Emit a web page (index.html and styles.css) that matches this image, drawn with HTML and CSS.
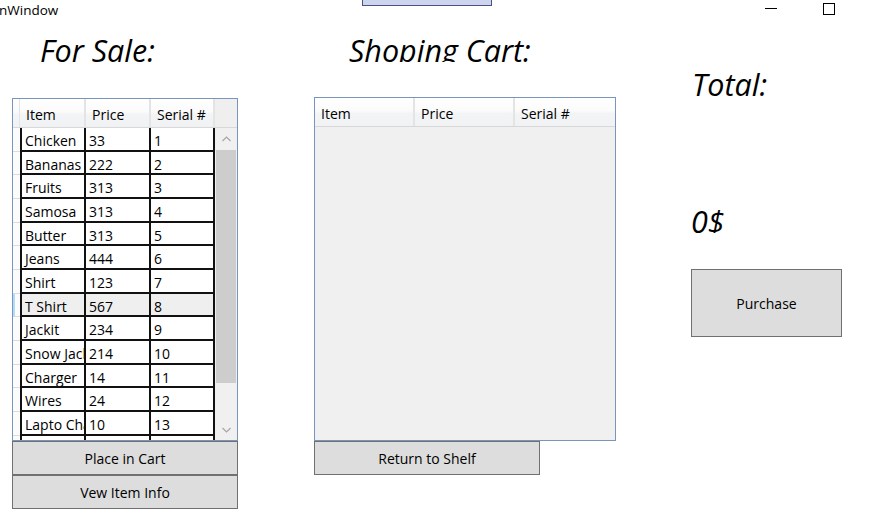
FILE: index.html
```html
<!DOCTYPE html>
<html>
<head>
<meta charset="utf-8">
<title>MainWindow</title>
<link rel="stylesheet" href="styles.css">
</head>
<body>
<div class="window">
  <div class="titlebar">
    <span class="title">nWindow</span>
    <div class="drag-tab"></div>
    <div class="controls">
      <span class="ctl-min"></span>
      <span class="ctl-max"></span>
    </div>
  </div>
  <div class="content">
    <section class="col col-sale">
      <div class="heading heading-sale">For Sale:</div>
      <div class="grid grid-sale">
        <div class="ghead">
          <div class="gh gh-corner"></div>
          <div class="gh gh-item">Item</div>
          <div class="gh gh-price">Price</div>
          <div class="gh gh-serial">Serial #</div>
          <div class="gh gh-fill"></div>
        </div>
        <div class="gbody">
          <div class="rowheads">
            <div class="rh"></div><div class="rh"></div><div class="rh"></div><div class="rh"></div>
            <div class="rh"></div><div class="rh"></div><div class="rh"></div><div class="rh rh-hover"></div>
            <div class="rh"></div><div class="rh"></div><div class="rh"></div><div class="rh"></div>
            <div class="rh"></div><div class="rh"></div>
          </div>
          <div class="cells">
            <div class="row"><div class="c c-item">Chicken</div><div class="c c-price">33</div><div class="c c-serial">1</div></div>
            <div class="row"><div class="c c-item">Bananas</div><div class="c c-price">222</div><div class="c c-serial">2</div></div>
            <div class="row"><div class="c c-item">Fruits</div><div class="c c-price">313</div><div class="c c-serial">3</div></div>
            <div class="row"><div class="c c-item">Samosa</div><div class="c c-price">313</div><div class="c c-serial">4</div></div>
            <div class="row"><div class="c c-item">Butter</div><div class="c c-price">313</div><div class="c c-serial">5</div></div>
            <div class="row"><div class="c c-item">Jeans</div><div class="c c-price">444</div><div class="c c-serial">6</div></div>
            <div class="row"><div class="c c-item">Shirt</div><div class="c c-price">123</div><div class="c c-serial">7</div></div>
            <div class="row row-hover"><div class="c c-item">T Shirt</div><div class="c c-price">567</div><div class="c c-serial">8</div></div>
            <div class="row"><div class="c c-item">Jackit</div><div class="c c-price">234</div><div class="c c-serial">9</div></div>
            <div class="row"><div class="c c-item">Snow Jacket</div><div class="c c-price">214</div><div class="c c-serial">10</div></div>
            <div class="row"><div class="c c-item">Charger</div><div class="c c-price">14</div><div class="c c-serial">11</div></div>
            <div class="row"><div class="c c-item">Wires</div><div class="c c-price">24</div><div class="c c-serial">12</div></div>
            <div class="row"><div class="c c-item">Lapto Charger</div><div class="c c-price">10</div><div class="c c-serial">13</div></div>
            <div class="row"><div class="c c-item"></div><div class="c c-price"></div><div class="c c-serial"></div></div>
          </div>
          <div class="scrollbar">
            <div class="sb-arrow sb-up">
              <svg width="9" height="6" viewBox="0 0 9 6"><path d="M0.5 5 L4.5 1 L8.5 5" fill="none" stroke="#a6a6a6" stroke-width="1.2"/></svg>
            </div>
            <div class="sb-thumb"></div>
            <div class="sb-track"></div>
            <div class="sb-arrow sb-down">
              <svg width="9" height="6" viewBox="0 0 9 6"><path d="M0.5 1 L4.5 5 L8.5 1" fill="none" stroke="#a6a6a6" stroke-width="1.2"/></svg>
            </div>
          </div>
        </div>
      </div>
      <button class="btn btn-wide">Place in Cart</button>
      <button class="btn btn-wide">Vew Item Info</button>
    </section>

    <section class="col col-cart">
      <div class="heading heading-cart">Shoping Cart:</div>
      <div class="grid grid-cart">
        <div class="ghead">
          <div class="gh gh-cart">Item</div>
          <div class="gh gh-cart">Price</div>
          <div class="gh gh-cart gh-last">Serial #</div>
        </div>
        <div class="gbody gbody-cart"></div>
      </div>
      <button class="btn btn-wide">Return to Shelf</button>
    </section>

    <section class="col col-total">
      <div class="heading heading-total">Total:</div>
      <div class="heading heading-amount">0$</div>
      <button class="btn btn-purchase">Purchase</button>
    </section>
  </div>
</div>
</body>
</html>
```

FILE: styles.css
```css
* { box-sizing: border-box; }

html, body {
  margin: 0;
  padding: 0;
  background: #ffffff;
}

body {
  font-family: "Open Sans", "Noto Sans", sans-serif;
  font-size: 14px;
  color: #000;
}

.window {
  width: 870px;
  height: 530px;
  overflow: hidden;
  position: relative;
  background: #fff;
}

/* ---------- title bar ---------- */
.titlebar {
  height: 20px;
  display: flex;
  align-items: flex-start;
  position: relative;
}

.title {
  font-size: 13.5px;
  line-height: 20px;
  margin-left: -1px;
  color: #000;
}

.drag-tab {
  position: absolute;
  left: 362px;
  top: -1px;
  width: 130px;
  height: 7px;
  background: #cdd5ee;
  border: 1px solid #4a5283;
}

.controls {
  margin-left: auto;
  display: flex;
  align-items: flex-start;
  margin-right: 35px;
}

.ctl-min {
  width: 12px;
  height: 1px;
  background: #000;
  margin-top: 8px;
}

.ctl-max {
  width: 12px;
  height: 12px;
  border: 1px solid #000;
  margin-top: 3px;
  margin-left: 46px;
}

/* ---------- content ---------- */
.content {
  display: flex;
  align-items: flex-start;
}

.col {
  display: flex;
  flex-direction: column;
}

.col-sale  { margin-left: 12px; width: 226px; }
.col-cart  { margin-left: 76px; width: 302px; }
.col-total { margin-left: 75px; width: 151px; }

.heading {
  height: 42px;
  line-height: 61px;
  overflow: hidden;
  white-space: nowrap;
  font-style: italic;
  font-size: 30.5px;
  color: #000;
}

.heading-sale  { padding-left: 28px; }
.heading-cart  { padding-left: 35px; }
.heading-total { padding-left: 1px; margin-top: 34px; }
.heading-amount { padding-left: 0; margin-top: 95px; }

/* ---------- grids ---------- */
.grid {
  border: 1px solid #7896bd;
  display: flex;
  flex-direction: column;
  overflow: hidden;
}

.grid-sale {
  margin-top: 36px;
  height: 343px;
}

.grid-cart {
  margin-top: 35px;
  height: 344px;
  background: #f0f0f0;
}

.ghead {
  display: flex;
  height: 29px;
  flex: none;
  background: linear-gradient(#ffffff 0%, #fbfbfb 45%, #f3f4f5 55%, #f1f2f3 100%);
  border-bottom: 1px solid #d8d8d8;
}

.gh {
  height: 100%;
  line-height: 28px;
  padding-top: 2px;
  white-space: nowrap;
  overflow: hidden;
  border-right: 2px solid #e4e4e4;
}

.gh-corner { width: 7px; border-right: 1px solid #e4e4e4; }
.gh-item   { width: 66px; padding-left: 6px; }
.gh-price  { width: 65px; padding-left: 6px; }
.gh-serial { width: 64px; padding-left: 6px; }
.gh-fill   { flex: 1; background: #efefef; border-right: none; }

.gh-cart   { width: 100px; padding-left: 6px; }
.gh-last   { border-right: none; flex: 1; }

.gbody {
  display: flex;
  flex: 1;
  min-height: 0;
  overflow: hidden;
}

.gbody-cart { background: #f0f0f0; }

.rowheads {
  width: 7px;
  flex: none;
  background: #fbfbfb;
}

.rh {
  height: 23.67px;
  border-bottom: 1px solid #dcdcdc;
}

.rh-hover {
  border-left: 2px solid #b5dcf7;
}

.cells {
  width: 195px;
  flex: none;
  border-left: 2px solid #111;
  background: #fff;
}

.row {
  display: flex;
  height: 23.67px;
  border-bottom: 2px solid #111;
}

.row-hover { background: #efefef; }

.c {
  height: 100%;
  line-height: 21px;
  padding-top: 2px;
  padding-left: 3px;
  white-space: nowrap;
  overflow: hidden;
  border-right: 2px solid #111;
}

.c-item   { width: 64px; }
.c-price  { width: 65px; }
.c-serial { width: 64px; }

/* ---------- scrollbar ---------- */
.scrollbar {
  flex: 1;
  background: #f0f0f0;
  display: flex;
  flex-direction: column;
}

.sb-arrow {
  display: flex;
  align-items: center;
  justify-content: center;
  flex: none;
}

.sb-up   { height: 22px; }
.sb-down { height: 21px; }

.sb-thumb {
  height: 233px;
  margin: 0 1px;
  background: #cdcdcd;
  flex: none;
}

.sb-track { flex: 1; }

/* ---------- buttons ---------- */
.btn {
  font-family: "Open Sans", "Noto Sans", sans-serif;
  font-size: 14px;
  color: #000;
  background: #dddddd;
  border: 1px solid #707070;
  padding: 0;
  margin: 0;
  display: flex;
  align-items: center;
  justify-content: center;
}

.btn-wide {
  width: 226px;
  height: 34px;
}

.btn-purchase {
  width: 151px;
  height: 68px;
  margin-top: 36px;
}
```
